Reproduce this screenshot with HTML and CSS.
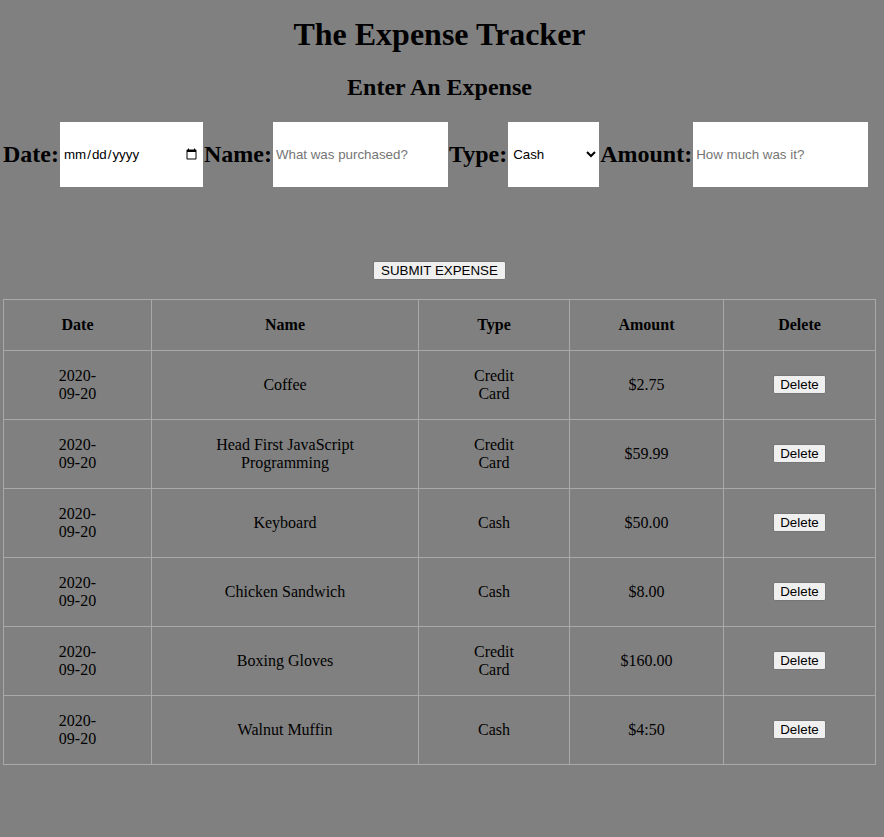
FILE: index.html
```html
<!DOCTYPE html>
<html>
<head>
<meta charset="utf-8">
<title>The Expense Tracker</title>
<link rel="stylesheet" href="styles.css">
</head>
<body>
<div class="page">
  <h1 class="title">The Expense Tracker</h1>
  <h2 class="subtitle">Enter An Expense</h2>
  <form class="entry">
    <label class="lbl" for="date">Date:</label><input class="field field-date" id="date" type="date"><label class="lbl" for="name">Name:</label><input class="field field-text" id="name" type="text" placeholder="What was purchased?"><label class="lbl" for="type">Type:</label><select class="field field-select" id="type"><option>Cash</option><option>Credit Card</option><option>Debit Card</option></select><label class="lbl" for="amount">Amount:</label><input class="field field-text" id="amount" type="text" placeholder="How much was it?">
  </form>
  <div class="submit-row"><button class="btn btn-submit" type="button">SUBMIT EXPENSE</button></div>
  <table class="expenses">
    <colgroup>
      <col class="c-date"><col class="c-name"><col class="c-type"><col class="c-amount"><col class="c-delete">
    </colgroup>
    <thead>
      <tr><th>Date</th><th>Name</th><th>Type</th><th>Amount</th><th>Delete</th></tr>
    </thead>
    <tbody>
      <tr><td>2020-09-20</td><td>Coffee</td><td>Credit Card</td><td>$2.75</td><td><button class="btn" type="button">Delete</button></td></tr>
      <tr><td>2020-09-20</td><td>Head First JavaScript Programming</td><td>Credit Card</td><td>$59.99</td><td><button class="btn" type="button">Delete</button></td></tr>
      <tr><td>2020-09-20</td><td>Keyboard</td><td>Cash</td><td>$50.00</td><td><button class="btn" type="button">Delete</button></td></tr>
      <tr><td>2020-09-20</td><td>Chicken Sandwich</td><td>Cash</td><td>$8.00</td><td><button class="btn" type="button">Delete</button></td></tr>
      <tr><td>2020-09-20</td><td>Boxing Gloves</td><td>Credit Card</td><td>$160.00</td><td><button class="btn" type="button">Delete</button></td></tr>
      <tr><td>2020-09-20</td><td>Walnut Muffin</td><td>Cash</td><td>$4:50</td><td><button class="btn" type="button">Delete</button></td></tr>
    </tbody>
  </table>
</div>
</body>
</html>
```
FILE: styles.css
```css
html, body {
  margin: 0;
  padding: 0;
  background: #808080;
}
body {
  font-family: "Liberation Serif", "Times New Roman", serif;
  color: #000;
}
.page {
  padding: 16px 8px 40px 3px;
}
.title {
  margin: 0;
  font-size: 32px;
  line-height: 37px;
  text-align: center;
  font-weight: bold;
}
.subtitle {
  margin: 20px 0 0 0;
  font-size: 24px;
  line-height: 28px;
  text-align: center;
  font-weight: bold;
}
.entry {
  display: flex;
  align-items: center;
  margin-top: 21px;
  height: 65px;
}
.lbl {
  font-size: 24px;
  font-weight: bold;
  line-height: 28px;
  position: relative;
  top: -1px;
}
.field {
  box-sizing: border-box;
  height: 65px;
  border: none;
  background: #fff;
  margin: 0 1px;
  padding: 0 3px;
  font-family: "Liberation Sans", Arial, sans-serif;
  font-size: 13.33px;
  color: #000;
  outline: none;
}
.field-date { width: 143px; }
.field-text { width: 175px; }
.field-select { width: 91px; padding: 0 1px; }
.field::placeholder { color: #757575; }
.submit-row {
  display: flex;
  justify-content: center;
  margin-top: 74px;
}
.btn {
  font-family: "Liberation Sans", Arial, sans-serif;
  font-size: 13.33px;
  background: #efefef;
  color: #000;
  border: 1px solid #767676;
  border-radius: 2px;
  padding: 1px 6px;
  line-height: 15px;
}
.btn-submit {
  padding: 1px 7px;
}
.expenses {
  margin-top: 19px;
  width: 873px;
  border-collapse: collapse;
  table-layout: fixed;
}
.c-date { width: 148px; }
.c-name { width: 267px; }
.c-type { width: 151px; }
.c-amount { width: 154px; }
.c-delete { width: 152px; }
.expenses th, .expenses td {
  border: 1px solid #a9a9a9;
  padding: 16px 46px;
  text-align: center;
  font-size: 16px;
  line-height: 18px;
}
.expenses td .btn {
  position: relative;
  top: -1px;
}
.expenses th { font-weight: bold; }
```
